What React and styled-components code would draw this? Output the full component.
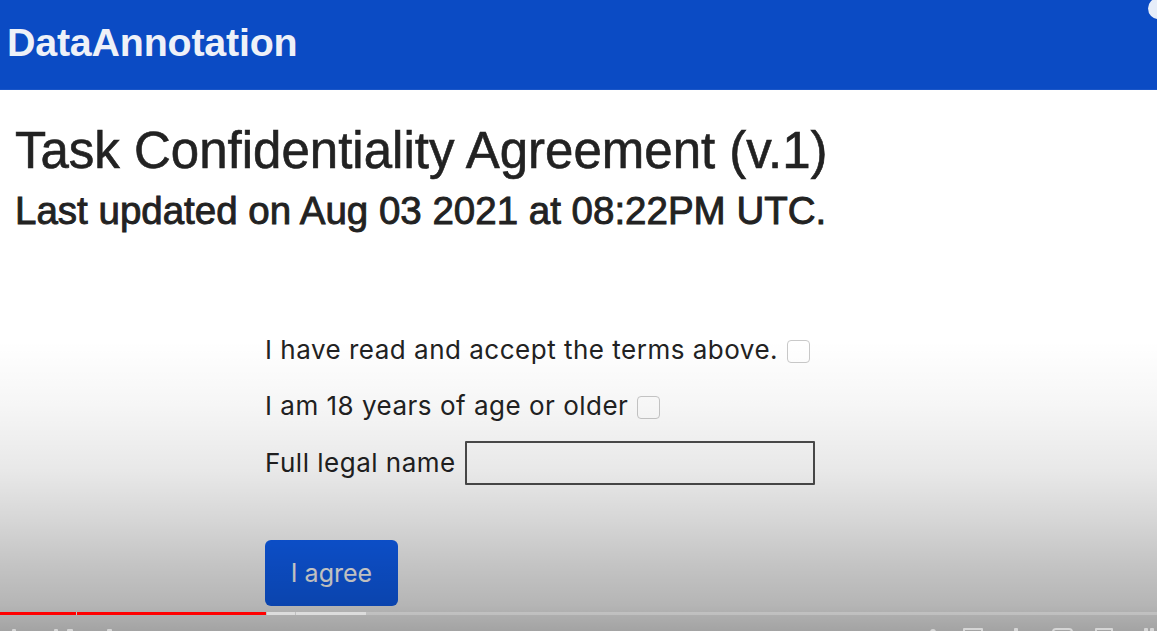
import styled, { createGlobalStyle } from "styled-components";

const GlobalStyle = createGlobalStyle`
  html, body {
    margin: 0;
    padding: 0;
    background: #ffffff;
  }
  * {
    box-sizing: border-box;
  }
`

const Frame = styled.div`
  position: relative;
  width: 1157px;
  height: 631px;
  overflow: hidden;
  background: #ffffff;
  font-family: "Liberation Sans", Arial, sans-serif;
  color: #222222;
`

const Header = styled.header`
  display: flex;
  align-items: center;
  height: 90px;
  padding: 0 0 4px 7px;
  background: #0b4bc4;
  border-bottom: 1px solid #1a56c8;
`

const Brand = styled.div`
  font-family: "Liberation Sans", Arial, sans-serif;
  font-weight: 700;
  font-size: 39.4px;
  color: #eef1f8;
  letter-spacing: -0.2px;
`

const Cursor = styled.span`
  position: absolute;
  top: -2px;
  right: -12px;
  width: 21px;
  height: 21px;
  border-radius: 50%;
  background: #e6edf9;
`

const Main = styled.main`
  display: flex;
  flex-direction: column;
  padding-left: 15px;
`

const Title = styled.h1`
  margin: 31px 0 0 0;
  font-size: 51px;
  line-height: 60px;
  font-weight: 400;
  color: #222222;
  -webkit-text-stroke: 0.6px #222222;
`

const Updated = styled.h2`
  margin: 7px 0 0 0;
  font-size: 38.5px;
  line-height: 46px;
  font-weight: 400;
  color: #222222;
  -webkit-text-stroke: 0.9px #222222;
`

const Form = styled.form`
  display: flex;
  flex-direction: column;
  align-items: flex-start;
  margin: 98px 0 0 250px;
  font-family: Inter, "Liberation Sans", sans-serif;
`

const Row = styled.label`
  display: flex;
  align-items: center;
  gap: 9px;
  margin-top: ${(p) => p.$top || 0}px;
  font-size: 26px;
  letter-spacing: 0.5px;
  line-height: 36px;
  color: #222222;
`

const Check = styled.span`
  display: inline-block;
  width: 23px;
  height: 23px;
  margin-top: 3px;
  border: 1px solid #c9c9c9;
  border-radius: 4px;
  background: #ffffff;
`

const NameInput = styled.input`
  width: 350px;
  height: 44px;
  border: 2px solid #4d4d4d;
  border-radius: 1px;
  background: #ffffff;
  font-size: 20px;
  padding: 0 8px;
  outline: none;
`

const AgreeButton = styled.button`
  margin-top: 55px;
  width: 133px;
  height: 66px;
  border: none;
  border-radius: 6px;
  background: #0f60f5;
  color: #ffffff;
  font-family: Inter, "Liberation Sans", sans-serif;
  font-size: 25px;
  cursor: pointer;
`

const Shade = styled.div`
  position: absolute;
  left: 0;
  right: 0;
  top: 340px;
  bottom: 0;
  pointer-events: none;
  background: linear-gradient(
    to bottom,
    rgba(0, 0, 0, 0) 0%,
    rgba(0, 0, 0, 0.035) 22%,
    rgba(0, 0, 0, 0.09) 45%,
    rgba(0, 0, 0, 0.16) 62%,
    rgba(0, 0, 0, 0.23) 77%,
    rgba(0, 0, 0, 0.29) 91%,
    rgba(0, 0, 0, 0.36) 100%
  );
`

const Progress = styled.div`
  position: absolute;
  left: 0;
  right: 0;
  top: 612px;
  height: 3px;
  display: flex;
  gap: 1px;
  background: rgba(255, 255, 255, 0.22);
`

const Segment = styled.span`
  flex: 0 0 ${(p) => p.$w}px;
  background: ${(p) => p.$color};
`

const Controls = styled.div`
  position: absolute;
  left: 0;
  right: 0;
  top: 628px;
  height: 10px;
`

const Tip = styled.span`
  position: absolute;
  top: ${(p) => p.$y || 0}px;
  height: 6px;
  border: 2px solid rgba(255, 255, 255, 0.55);
  border-bottom: none;
  border-radius: ${(p) => p.$r || 1}px ${(p) => p.$r || 1}px 0 0;
`

const segments = [
  { w: 76, color: "#ff0000" },
  { w: 189, color: "#ff0000" },
  { w: 28, color: "#dddddd" },
  { w: 70, color: "#dddddd" },
]

const tips = [
  { x: 12, w: 4, y: 1 },
  { x: 54, w: 4, y: 1 },
  { x: 67, w: 6, y: 1 },
  { x: 107, w: 5, y: 1 },
  { x: 930, w: 6, y: 1, r: 3 },
  { x: 963, w: 20 },
  { x: 1014, w: 3 },
  { x: 1052, w: 21, r: 4 },
  { x: 1095, w: 18 },
  { x: 1144, w: 3 },
  { x: 1150, w: 3 },
]

const App = () => {
  return (
    <Frame>
      <GlobalStyle />
      <Header>
        <Brand>DataAnnotation</Brand>
      </Header>

      <Main>
        <Title>Task Confidentiality Agreement (v.1)</Title>
        <Updated>Last updated on Aug 03 2021 at 08:22PM UTC.</Updated>

        <Form onSubmit={(e) => e.preventDefault()}>
          <Row>
            I have read and accept the terms above.
            <Check />
          </Row>
          <Row $top={20}>
            I am 18 years of age or older
            <Check />
          </Row>
          <Row $top={17}>
            Full legal name
            <NameInput type="text" />
          </Row>
          <AgreeButton type="submit">I agree</AgreeButton>
        </Form>
      </Main>

      <Shade />
      <Progress>
        {segments.map((s, i) => (
          <Segment key={i} $w={s.w} $color={s.color} />
        ))}
      </Progress>
      <Controls>
        {tips.map((t, i) => (
          <Tip key={i} $y={t.y} $r={t.r} style={{ left: t.x, width: t.w }} />
        ))}
      </Controls>
      <Cursor />
    </Frame>
  );
}

export default App;
